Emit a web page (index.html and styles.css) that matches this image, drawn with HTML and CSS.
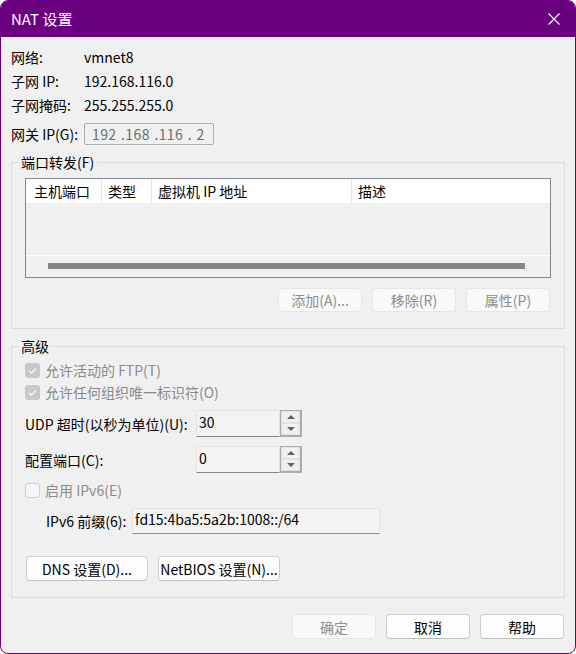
FILE: index.html
```html
<!DOCTYPE html>
<html lang="zh-CN">
<head>
<meta charset="utf-8">
<title>NAT 设置</title>
<link rel="stylesheet" href="styles.css">
</head>
<body>
<div class="window">
  <div class="titlebar">
    <span class="title">NAT 设置</span>
    <svg class="close" width="12" height="12" viewBox="0 0 12 12"><path d="M0.5 0.5 L11.5 11.5 M11.5 0.5 L0.5 11.5" stroke="#fff" stroke-width="1.1" fill="none"/></svg>
  </div>
  <div class="content">
    <div class="info">
      <div class="info-row"><span class="info-label">网络:</span><span>vmnet8</span></div>
      <div class="info-row"><span class="info-label">子网 IP:</span><span>192.168.116.0</span></div>
      <div class="info-row"><span class="info-label">子网掩码:</span><span>255.255.255.0</span></div>
      <div class="info-row gateway"><span class="info-label">网关 IP(G):</span><div class="ip-box">192 .168 .116 . 2</div></div>
    </div>

    <fieldset class="group">
      <legend>端口转发(F)</legend>
      <div class="forward-body">
        <div class="list">
          <div class="list-head">
            <div class="col c1">主机端口</div>
            <div class="col c2">类型</div>
            <div class="col c3">虚拟机 IP 地址</div>
            <div class="col c4">描述</div>
          </div>
          <div class="list-body"></div>
          <div class="hscroll"><div class="thumb"></div></div>
        </div>
        <div class="btn-row">
          <button class="btn small disabled">添加(A)...</button>
          <button class="btn small disabled">移除(R)</button>
          <button class="btn small disabled">属性(P)</button>
        </div>
      </div>
    </fieldset>

    <fieldset class="group">
      <legend>高级</legend>
      <div class="adv-body">
        <div class="check-row disabled-text">
          <svg class="cb" width="15" height="15" viewBox="0 0 15 15"><rect x="0" y="0" width="15" height="15" rx="3" fill="#c8c8c8"/><path d="M4 7.8 L6.4 10.1 L11 5.3" stroke="#fff" stroke-width="1.1" fill="none"/></svg>
          <span>允许活动的 FTP(T)</span>
        </div>
        <div class="check-row disabled-text">
          <svg class="cb" width="15" height="15" viewBox="0 0 15 15"><rect x="0" y="0" width="15" height="15" rx="3" fill="#c8c8c8"/><path d="M4 7.8 L6.4 10.1 L11 5.3" stroke="#fff" stroke-width="1.1" fill="none"/></svg>
          <span>允许任何组织唯一标识符(O)</span>
        </div>
        <div class="spin-row first">
          <span class="spin-label">UDP 超时(以秒为单位)(U):</span>
          <div class="spin">
            <div class="spin-input">30</div>
            <div class="spin-btns"><div class="spin-btn"><span class="arrow-up"></span></div><div class="spin-btn"><span class="arrow-down"></span></div></div>
          </div>
        </div>
        <div class="spin-row second">
          <span class="spin-label">配置端口(C):</span>
          <div class="spin">
            <div class="spin-input">0</div>
            <div class="spin-btns"><div class="spin-btn"><span class="arrow-up"></span></div><div class="spin-btn"><span class="arrow-down"></span></div></div>
          </div>
        </div>
        <div class="check-row disabled-text ipv6-check">
          <span class="cb-empty"></span>
          <span>启用 IPv6(E)</span>
        </div>
        <div class="prefix-row">
          <span class="prefix-label">IPv6 前缀(6):</span>
          <div class="prefix-input">fd15:4ba5:5a2b:1008::/64</div>
        </div>
        <div class="dns-row">
          <button class="btn wide">DNS 设置(D)...</button>
          <button class="btn wide">NetBIOS 设置(N)...</button>
        </div>
      </div>
    </fieldset>

    <div class="footer">
      <button class="btn foot disabled">确定</button>
      <button class="btn foot">取消</button>
      <button class="btn foot">帮助</button>
    </div>
  </div>
</div>
</body>
</html>
```

FILE: styles.css
```css
html, body {
  margin: 0;
  padding: 0;
  background: #ffffff;
}
body {
  font-family: "Noto Sans CJK SC", "Noto Sans", sans-serif;
  font-size: 14px;
  color: #000;
}
.window {
  width: 576px;
  height: 654px;
  box-sizing: border-box;
  border: 1px solid #6a0080;
  border-radius: 8px;
  background: #f0f0f0;
  overflow: hidden;
  display: flex;
  flex-direction: column;
}
.titlebar {
  height: 36px;
  flex-shrink: 0;
  background: #6a0080;
  color: #fff;
  display: flex;
  align-items: center;
  padding-left: 10px;
}
.title {
  font-size: 15px;
  line-height: 20px;
}
.close {
  margin-left: auto;
  margin-right: 15px;
}
.content {
  padding: 8px 10px 0 10px;
}
.info-row {
  display: flex;
  align-items: center;
  height: 24px;
  line-height: 20px;
}
.info-label {
  width: 73px;
  flex-shrink: 0;
}
.info-row.gateway {
  height: 22px;
  margin-top: 6px;
}
.ip-box {
  width: 130px;
  height: 22px;
  box-sizing: border-box;
  border: 1px solid #adadad;
  border-radius: 2px;
  color: #6d6d6d;
  padding-left: 7px;
  line-height: 20px;
  letter-spacing: 0.4px;
  word-spacing: 1px;
}
.group {
  margin: 7px 0 0 0;
  padding: 0;
  border: 1px solid #dcdcdc;
  min-width: 0;
}
.group legend {
  margin-left: 6px;
  padding: 0 3px;
  line-height: 20px;
  height: 20px;
}
.forward-body {
  padding: 6px 13px 16px 13px;
}
.list {
  height: 100px;
  box-sizing: border-box;
  border: 1px solid #828790;
  display: flex;
  flex-direction: column;
}
.list-head {
  height: 24px;
  background: #fff;
  display: flex;
  line-height: 24px;
}
.col {
  box-sizing: border-box;
  border-right: 1px solid #e5e5e5;
  padding-left: 6px;
  white-space: nowrap;
}
.c1 { width: 76px; padding-left: 8px; }
.c2 { width: 50px; }
.c3 { width: 200px; }
.c4 { flex: 1; border-right: none; }
.list-body {
  height: 52px;
  border-bottom: 1px solid #ffffff;
}
.hscroll {
  flex: 1;
  padding: 7px 25px 0 22px;
}
.thumb {
  height: 6px;
  background: #858585;
}
.btn-row {
  display: flex;
  justify-content: flex-end;
  gap: 10px;
  margin-top: 10px;
  padding-right: 1px;
}
.btn {
  box-sizing: border-box;
  border: 1px solid #d0d0d0;
  border-bottom-color: #bdbdbd;
  border-radius: 4px;
  background: #fdfdfd;
  font-family: inherit;
  font-size: 14px;
  color: #000;
  padding: 0;
  margin: 0;
  line-height: 20px;
}
.btn.disabled {
  background: #f9f9f9;
  border-color: #e6e6e6;
  color: #8d8d8d;
}
.btn.small {
  width: 84px;
  height: 24px;
}
.btn.wide {
  width: 122px;
  height: 25px;
}
.btn.foot {
  width: 84px;
  height: 25px;
}
.adv-body {
  padding: 3px 13px 16px 13px;
}
.check-row {
  display: flex;
  align-items: center;
  gap: 5px;
  height: 22px;
  line-height: 20px;
}
.disabled-text {
  color: #8b8b8b;
}
.cb {
  flex-shrink: 0;
}
.cb-empty {
  width: 15px;
  height: 15px;
  box-sizing: border-box;
  border: 1px solid #cdcdcd;
  border-radius: 3px;
  background: #f6f6f6;
  flex-shrink: 0;
}
.ipv6-check {
  margin-top: 6px;
}
.spin-row {
  display: flex;
  align-items: center;
  height: 27px;
  line-height: 20px;
}
.spin-row.first { margin-top: 7px; }
.spin-row.second { margin-top: 9px; }
.spin-label {
  width: 171px;
  flex-shrink: 0;
}
.spin {
  display: flex;
  width: 106px;
  height: 27px;
}
.spin-input {
  width: 84px;
  box-sizing: border-box;
  border: 1px solid #e3e3e3;
  border-bottom-color: #868686;
  background: #f3f3f3;
  padding: 1px 0 0 2px;
  line-height: 20px;
}
.spin-btns {
  width: 22px;
  box-sizing: border-box;
  border: 1px solid #acacac;
  border-right-width: 2px;
  border-bottom-width: 2px;
  display: flex;
  flex-direction: column;
}
.spin-btn {
  flex: 1;
  box-sizing: border-box;
  border: 1px solid #e2e2e2;
  background: #f0f0f0;
  display: flex;
  align-items: center;
  justify-content: center;
}
.arrow-up {
  width: 0;
  height: 0;
  border-left: 4px solid transparent;
  border-right: 4px solid transparent;
  border-bottom: 4px solid #606060;
}
.arrow-down {
  width: 0;
  height: 0;
  border-left: 4px solid transparent;
  border-right: 4px solid transparent;
  border-top: 4px solid #606060;
}
.prefix-row {
  display: flex;
  align-items: center;
  height: 26px;
  margin-top: 7px;
  padding-left: 21px;
  line-height: 20px;
}
.prefix-label {
  width: 86px;
  flex-shrink: 0;
}
.prefix-input {
  width: 248px;
  height: 26px;
  box-sizing: border-box;
  border: 1px solid #e3e3e3;
  border-bottom-color: #8a8a8a;
  background: #f3f3f3;
  padding: 0 0 0 2px;
  line-height: 20px;
}
.dns-row {
  display: flex;
  gap: 10px;
  margin-top: 22px;
  padding-left: 1px;
}
.footer {
  display: flex;
  justify-content: flex-end;
  gap: 10px;
  margin-top: 16px;
  padding-right: 1px;
}
```
